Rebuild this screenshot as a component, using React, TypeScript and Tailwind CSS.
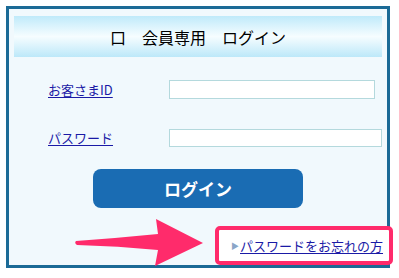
import React from 'react';

const jp = { fontFamily: '"Noto Sans CJK JP", "Liberation Sans", sans-serif' };

const Arrow = () => (
  <svg className="absolute left-0 top-0 pointer-events-none" width="399" height="278" viewBox="0 0 399 278">
    <path
      d="M76 241 Q118 238 158 234 L156 219 L203 243 L155 266 L158 250 Q118 246 77 245 Q74 243 76 241 Z"
      fill="#ff2b6b"
    />
  </svg>
);

const App = () => {
  return (
    <div className="relative w-[399px] h-[278px] bg-white overflow-hidden" style={jp}>
      <div className="ml-[6px] mt-[6px] w-[384px] h-[262px] border-[3px] border-[#1b6a96] bg-[#f1f9fd] px-[5px] pt-[7px]">
        <div className="h-[41px] flex items-center justify-center bg-linear-to-b from-[#bfeafa] via-[#f6fdff] to-[#bce8f9] text-[16px] text-black tracking-[0px]">
          口　会員専用　ログイン
        </div>

        <div className="flex items-center mt-[23px] h-[19px]">
          <a className="ml-[34px] w-[121px] text-[13px] text-[#1a1aa6] underline underline-offset-2">お客さまID</a>
          <div className="w-[206px] h-[19px] border border-[#b4d9dd] bg-white" />
        </div>

        <div className="flex items-center mt-[30px] h-[18px]">
          <a className="ml-[34px] w-[121px] text-[13px] text-[#1a1aa6] underline underline-offset-2">パスワード</a>
          <div className="w-[213px] h-[18px] border border-[#b4d9dd] bg-white" />
        </div>

        <div className="ml-[79px] mt-[22px] w-[210px] h-[39px] rounded-[8px] bg-[#1a6cb3] flex items-center justify-center text-white font-bold text-[17px]">
          ログイン
        </div>
      </div>

      <Arrow />

      <div className="absolute left-[215px] top-[226px] w-[178px] h-[39px] rounded-[5px] border-[4px] border-[#ff2b6b] bg-white flex items-center pl-[12px]">
        <span className="text-[8px] text-[#8aa6c8] mr-[1px]">▶</span>
        <a className="text-[13px] text-[#1a1aa6] underline underline-offset-2 leading-none">パスワードをお忘れの方</a>
      </div>
    </div>
  );
};

export default App;
